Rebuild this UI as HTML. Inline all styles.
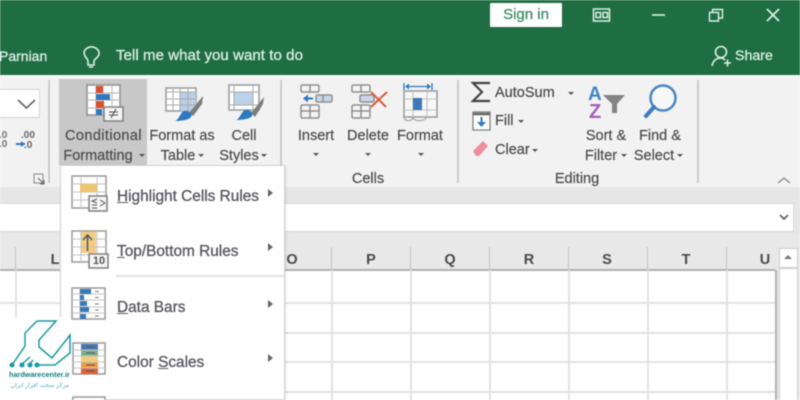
<!DOCTYPE html>
<html><head><meta charset="utf-8"><style>
html,body{margin:0;padding:0;background:#fff}
#p{position:relative;width:800px;height:400px;overflow:hidden;background:#f2f2f2;font-family:"Liberation Sans",sans-serif;filter:blur(.5px)}
.a{position:absolute}
.t{position:absolute;white-space:nowrap;font-size:14.5px;color:#4c4c4c;line-height:18px;text-align:center;transform:translateX(-50%);-webkit-text-stroke:.2px #4c4c4c}
.l{position:absolute;white-space:nowrap;font-size:14.5px;color:#4c4c4c;line-height:18px;-webkit-text-stroke:.2px #4c4c4c}
.w{position:absolute;white-space:nowrap;color:#dcefe4;font-size:15px;line-height:18px;-webkit-text-stroke:.3px #dcefe4}
.h{position:absolute;font-weight:bold;font-size:14.5px;color:#4a4a4a;line-height:18px;transform:translateX(-50%)}
.m{position:absolute;left:117px;white-space:nowrap;font-size:15.4px;color:#5a5a64;line-height:18px;-webkit-text-stroke:.35px #5a5a64}
.m u{text-decoration-thickness:1px}
.ar{position:absolute;width:0;height:0;border-left:5px solid #666;border-top:4px solid transparent;border-bottom:4px solid transparent}
.dn{position:absolute;width:0;height:0;border-top:3px solid #555;border-left:3px solid transparent;border-right:3px solid transparent}
.v{position:absolute;width:1.5px;background:#e2e2e2}
.g{position:absolute;height:1.5px;background:#e2e2e2}
.s{position:absolute;width:1.5px;background:#cacaca}
svg{position:absolute;overflow:visible}
</style></head><body><div id="p">

<div class="a" style="left:0;top:0;width:800px;height:75px;background:#1f6e43"></div>
<div class="a" style="left:0;top:75px;width:800px;height:3px;background:#f6f6f6"></div>
<div class="a" style="left:0;top:187px;width:800px;height:46px;background:#e6e6e6"></div>

<div class="w" style="left:-1px;top:47px;font-size:14px">Parnian</div>
<svg style="left:0;top:0" width="800" height="75" fill="none" stroke="#dcefe4" stroke-width="1.6">
<path d="M88 65v-4c0-2-4-4-4-9a8 8 0 0 1 15 0c1 5-5 7-5 9v4zM89 67h4"/>
<path d="M593.500 9h16v12h-16zM596 12.500h4.500v5H596zM603 12.500h4.500v5H603z" stroke-width="1.500"/>
<path d="M652 15h13" stroke-width="1.600"/>
<path d="M709.500 12.500h9v8.500h-9zM712.500 12.500v-3h10v8.500h-4" stroke-width="1.400"/>
<path d="M767 9l12 12M779 9l-12 12" stroke-width="1.800"/>
<circle cx="721" cy="52" r="5.500"/><path d="M712 66c1-5 4-8 9-8 2 0 3 1 4 2M724 63h7M727.500 59.500v7"/>
</svg>
<div class="w" style="left:116px;top:47px;letter-spacing:.07px">Tell me what you want to do</div>
<div class="w" style="left:735px;top:47px;font-size:14.2px">Share</div>
<div class="a" style="left:490px;top:3px;width:72px;height:24px;background:#fff;border-radius:1px"></div>
<div class="a" style="left:490px;top:6px;width:72px;text-align:center;font-size:15px;line-height:18px;color:#3d8a62;-webkit-text-stroke:.25px #3d8a62">Sign in</div>

<!-- left stub -->
<div class="a" style="left:0;top:89px;width:39px;height:27px;background:#fff;border:1px solid #d6d6d6;border-left:0"></div>
<svg style="left:0;top:0" width="60" height="190" fill="none"><path d="M18 100l8.500 8 8.500-8" stroke="#666" stroke-width="1.600"/>
<text x="-1" y="147" font-size="10" font-weight="bold" fill="#777" font-family="Liberation Sans">.0</text>
<text x="-1" y="138" font-size="10" font-weight="bold" fill="#777" font-family="Liberation Sans">.0</text>
<text x="21" y="138" font-size="10" font-weight="bold" fill="#666" font-family="Liberation Sans">.00</text>
<text x="24" y="148" font-size="10" font-weight="bold" fill="#666" font-family="Liberation Sans">.0</text>
<path d="M16 144h9" stroke="#2f78bd" stroke-width="2"/><path d="M21 141l4 3-4 3z" fill="#2f78bd"/>
<path d="M34 174h9v9h-9z" stroke="#888"/><path d="M38 178l6 6M44 180v4h-4" stroke="#666"/></svg>
<div class="s" style="left:48px;top:80px;height:103px"></div>
<div class="s" style="left:280px;top:80px;height:103px"></div>
<div class="s" style="left:457px;top:80px;height:103px"></div>
<div class="s" style="left:697px;top:80px;height:103px"></div>

<!-- highlighted button -->
<div class="a" style="left:59px;top:79px;width:88px;height:86px;background:#c8c8c8"></div>

<svg style="left:0;top:0" width="800" height="190" fill="none">
<!-- conditional formatting -->
<path d="M87 85h33v30H87z" fill="#fff" stroke="#8f8f8f" stroke-width="1.500"/>
<path d="M87 93h33M87 100h33M87 108h33M96 85v30M103 85v30M112 85v30" stroke="#b5b5b5"/>
<path d="M96 86h7v7h-7z" fill="#d9512c"/><path d="M96 94h14v6H96z" fill="#2f78bd"/><path d="M96 101h8v7h-8z" fill="#d9512c"/><path d="M96 109h6v6h-6z" fill="#2f78bd"/>
<path d="M104 107h19v14h-19z" fill="#f4f4f4" stroke="#808080" stroke-width="1.500"/>
<path d="M109 112h9M109 115h9M116 109l-5 9" stroke="#555" stroke-width="1.100"/>
<!-- format as table -->
<path d="M166 88h30v23h-30z" fill="#fff" stroke="#9a9a9a" stroke-width="1.500"/>
<path d="M180 92h16v19h-16z" fill="#b9cfe8"/>
<path d="M166 92h30M166 99h30M166 105h30M173 88v23M180 88v23M188 88v23" stroke="#a9a9a9"/>
<path d="M189 113l9-11 5-6-1 8-9 12z" fill="#7c7c7c"/>
<path d="M175 121c4-1 5-8 9-10 3-1 9 2 7 6-2 3-10 4-16 4z" fill="#2e78c0"/>
<!-- cell styles -->
<path d="M229 85h30v25h-30z" fill="#fff" stroke="#9a9a9a" stroke-width="1.500"/>
<path d="M234 92h19v13h-19z" fill="#bcd2ea"/>
<path d="M229 92h30M229 105h30M234 85v25M253 85v25" stroke="#a9a9a9"/>
<path d="M251 113l9-11 4-5-1 7-8 13z" fill="#7c7c7c"/>
<path d="M236 120c4-1 5-8 9-10 3-1 9 2 7 6-2 3-10 4-16 4z" fill="#2e78c0"/>
<!-- insert -->
<g stroke="#8f8f8f" stroke-width="1.500">
<rect x="301" y="85" width="18" height="7" rx="1.500" fill="#f4f4f4"/><path d="M310 85v7"/>
<rect x="301" y="105" width="18" height="13" rx="1.500" fill="#f4f4f4"/><path d="M310 105v13M301 111h18"/>
<rect x="316" y="95" width="16" height="7" rx="1.500" fill="#c7d7e8"/><path d="M323 95v7"/>
<rect x="352" y="85" width="18" height="7" rx="1.500" fill="#f4f4f4"/><path d="M361 85v7"/>
<rect x="352" y="105" width="18" height="13" rx="1.500" fill="#f4f4f4"/><path d="M361 105v13M352 111h18"/>
<rect x="360" y="95" width="14" height="7" rx="1.500" fill="#c7d7e8"/>
</g>
<path d="M304 98.500h9" stroke="#2f78bd" stroke-width="2"/><path d="M308 94.500l-5 4 5 4z" fill="#2f78bd"/>
<path d="M371 92l15 15M387 92l-16 15" stroke="#e0583a" stroke-width="2"/>
<!-- format -->
<path d="M404 91h33v26h-33z" fill="#f7f7f7" stroke="#9a9a9a" stroke-width="1.500"/>
<path d="M404 99h33M404 110h33M413 91v26M427 91v26" stroke="#c0c0c0"/>
<path d="M413 98h9v12h-9z" fill="#3b78b8"/>
<path d="M404 117c0 5 9 5 9 0M413 117c0 5 12 5 14 0" stroke="#9a9a9a"/>
<path d="M404 83v7M432 83v7M407 86.500h23" stroke="#2f78bd" stroke-width="1.300"/>
<path d="M405 86.500l4-3v6zM431 86.500l-4-3v6z" fill="#2f78bd"/>
<!-- autosum etc -->
<path d="M490 83h-17l9 9-9 9h17" stroke="#444" stroke-width="2.200"/>
<path d="M473 112h17v18h-17z" fill="#fff" stroke="#7f7f7f" stroke-width="1.300"/>
<path d="M473 114h17" stroke="#666" stroke-width="2.500"/>
<path d="M481.500 117v8" stroke="#2f78bd" stroke-width="2"/><path d="M477 122l4.500 5 4.500-5z" fill="#2f78bd"/>
<path d="M473 151l10-10 5 5-9 10h-3z" fill="#ee8d9c"/>
<!-- sort -->
<text x="588" y="100" font-size="19" font-weight="bold" fill="#3f86cc" font-family="Liberation Sans">A</text>
<text x="589" y="118" font-size="20" font-weight="bold" fill="#a45ec1" font-family="Liberation Sans">Z</text>
<path d="M603 95h22l-8 9v9h-5v-9z" fill="#838383"/>
<!-- find -->
<circle cx="663" cy="98" r="12.500" fill="#f7f7f7" stroke="#4a86c5" stroke-width="2.500"/>
<path d="M654 107l-8 9" stroke="#3c7cbd" stroke-width="4" stroke-linecap="round"/>
<path d="M778 183l6-5 6 5" stroke="#888" stroke-width="1.300"/>
</svg>

<div class="t" style="left:103.500px;top:127px;letter-spacing:.4px">Conditional</div>
<div class="t" style="left:98px;top:147px">Formatting</div>
<div class="t" style="left:182px;top:127px">Format as</div>
<div class="t" style="left:178px;top:147px">Table</div>
<div class="t" style="left:244px;top:127px">Cell</div>
<div class="t" style="left:239px;top:147px">Styles</div>
<div class="t" style="left:316px;top:127px">Insert</div>
<div class="t" style="left:368px;top:127px">Delete</div>
<div class="t" style="left:420px;top:127px">Format</div>
<div class="t" style="left:368px;top:170px">Cells</div>
<div class="l" style="left:495px;top:84px">AutoSum</div>
<div class="l" style="left:495px;top:112px">Fill</div>
<div class="l" style="left:495px;top:141px">Clear</div>
<div class="t" style="left:606px;top:127px">Sort &amp;</div>
<div class="t" style="left:601px;top:147px">Filter</div>
<div class="t" style="left:660px;top:127px">Find &amp;</div>
<div class="t" style="left:654px;top:147px">Select</div>
<div class="t" style="left:577px;top:170px">Editing</div>
<div class="dn" style="left:139px;top:154px"></div>
<div class="dn" style="left:198px;top:154px"></div>
<div class="dn" style="left:261px;top:154px"></div>
<div class="dn" style="left:313px;top:153px"></div>
<div class="dn" style="left:365px;top:153px"></div>
<div class="dn" style="left:418px;top:153px"></div>
<div class="dn" style="left:568px;top:92px"></div>
<div class="dn" style="left:518px;top:120px"></div>
<div class="dn" style="left:532px;top:149px"></div>
<div class="dn" style="left:621px;top:154px"></div>
<div class="dn" style="left:677px;top:154px"></div>

<!-- formula bar -->
<div class="a" style="left:0;top:203px;width:794px;height:29px;background:#fff;border:1px solid #d9d9d9;border-left:0;box-sizing:border-box"></div>
<svg style="left:0;top:0" width="800" height="400" fill="none"><path d="M780 215l4 4 4-4" stroke="#666" stroke-width="1.800"/></svg>

<!-- sheet -->
<div class="a" style="left:0;top:233px;width:800px;height:167px;background:#e8e8e8"></div>
<div class="a" style="left:0;top:270px;width:775px;height:130px;background:#fff"></div>
<div class="a" style="left:0;top:269px;width:775px;height:1.500px;background:#b0b0b0"></div>
<div class="a" style="left:775px;top:270px;width:1.500px;height:130px;background:#b0b0b0"></div>
<div class="g" style="left:0;top:302px;width:775px"></div>
<div class="g" style="left:0;top:332px;width:775px"></div>
<div class="g" style="left:0;top:361px;width:775px"></div>
<div class="g" style="left:0;top:391px;width:775px"></div>
<div class="v" style="left:15px;top:270px;height:130px"></div>
<div class="v" style="left:331px;top:270px;height:130px"></div>
<div class="v" style="left:410px;top:270px;height:130px"></div>
<div class="v" style="left:489px;top:270px;height:130px"></div>
<div class="v" style="left:568px;top:270px;height:130px"></div>
<div class="v" style="left:647px;top:270px;height:130px"></div>
<div class="v" style="left:726px;top:270px;height:130px"></div>
<div class="a" style="left:15px;top:247px;width:1px;height:23px;background:#c4c4c4"></div>
<div class="a" style="left:331px;top:247px;width:1px;height:23px;background:#c4c4c4"></div>
<div class="a" style="left:410px;top:247px;width:1px;height:23px;background:#c4c4c4"></div>
<div class="a" style="left:489px;top:247px;width:1px;height:23px;background:#c4c4c4"></div>
<div class="a" style="left:568px;top:247px;width:1px;height:23px;background:#c4c4c4"></div>
<div class="a" style="left:647px;top:247px;width:1px;height:23px;background:#c4c4c4"></div>
<div class="a" style="left:726px;top:247px;width:1px;height:23px;background:#c4c4c4"></div>
<div class="h" style="left:55px;top:251px">L</div>
<div class="h" style="left:292px;top:251px">O</div>
<div class="h" style="left:371px;top:251px">P</div>
<div class="h" style="left:450px;top:251px">Q</div>
<div class="h" style="left:529px;top:251px">R</div>
<div class="h" style="left:607px;top:251px">S</div>
<div class="h" style="left:686px;top:251px">T</div>
<div class="h" style="left:765px;top:251px">U</div>
<div class="a" style="left:779px;top:248px;width:17px;height:18px;background:#fff;border:1px solid #cfcfcf"></div>
<div class="a" style="left:784px;top:255px;width:0;height:0;border-bottom:4px solid #777;border-left:4px solid transparent;border-right:4px solid transparent"></div>
<div class="a" style="left:779px;top:268px;width:17px;height:132px;background:#fff;border:1px solid #cfcfcf"></div>

<!-- menu -->
<div class="a" style="left:60px;top:165px;width:225px;height:235px;background:#fff;border:1px solid #d2d2d2;box-sizing:border-box;box-shadow:1px 1px 2px rgba(0,0,0,.12)"></div>
<div class="a" style="left:116px;top:275px;width:168px;height:1.500px;background:#e2e2e2"></div>
<div class="m" style="top:188px"><u>H</u>ighlight Cells Rules</div>
<div class="m" style="top:243px"><u>T</u>op/Bottom Rules</div>
<div class="m" style="top:299px"><u>D</u>ata Bars</div>
<div class="m" style="top:354px">Color <u>S</u>cales</div>
<div class="ar" style="left:268px;top:189px"></div>
<div class="ar" style="left:268px;top:243px"></div>
<div class="ar" style="left:268px;top:300px"></div>
<div class="ar" style="left:268px;top:354px"></div>

<svg style="left:0;top:0" width="800" height="400" fill="none">
<!-- highlight -->
<path d="M72 176h34v32H72z" fill="#fff" stroke="#9a9a9a" stroke-width="1.500"/>
<path d="M72 184h34M72 192h34M72 200h34M81 176v32M97 176v32" stroke="#c4c4c4"/>
<path d="M80 184h17v8H80z" fill="#efc56e"/>
<path d="M89 196h18v15H89z" fill="#f6f6f6" stroke="#808080" stroke-width="1.500"/>
<path d="M97 199l-5 2 5 2M92 205h5M92 208h5M100 200l5 3-5 3" stroke="#555"/>
<!-- top10 -->
<path d="M72 231h34v31H72z" fill="#fff" stroke="#9a9a9a" stroke-width="1.500"/>
<path d="M81 232h15v21H81z" fill="#f3cc7e"/>
<path d="M72 239h34M72 247h34M72 255h34M81 231v31M97 231v31" stroke="#c4c4c4"/>
<path d="M87.500 251v-16M83 240l4.500-5 4.500 5" stroke="#555" stroke-width="1.500"/>
<path d="M89 254h19v14H89z" fill="#f6f6f6" stroke="#808080" stroke-width="1.500"/>
<!-- data bars -->
<path d="M72 288h33v31H72z" fill="#fff" stroke="#9a9a9a" stroke-width="1.500"/>
<path d="M72 294h33M72 300h33M72 307h33M72 313h33M80 288v31" stroke="#c4c4c4"/>
<path d="M80 289h11v5H80zM80 295h4v5h-4zM80 301h7v5h-7zM80 307h9v5h-9zM80 314h6v5h-6z" fill="#3b78b8"/>
<path d="M95 291.500h4M95 297.500h4M95 304h4M95 310h4M95 316h4" stroke="#777"/>
<!-- color scales -->
<path d="M73 343h32v31H73z" fill="#fff" stroke="#9a9a9a" stroke-width="1.500"/>
<path d="M81 344h17v6H81z" fill="#4678b4"/><path d="M81 350h17v6H81z" fill="#7cab92"/><path d="M81 356h17v6H81z" fill="#efcd7b"/><path d="M81 362h17v6H81z" fill="#ec9a43"/><path d="M81 368h17v6H81z" fill="#e06136"/>
<path d="M73 350h32M73 356h32M73 362h32M73 368h32" stroke="#c4c4c4"/>
<path d="M86 347h9M86 353h9M86 365h9M86 371h9" stroke="#555"/>
<!-- partial -->
<path d="M73 397h32v5H73z" fill="#fff" stroke="#9a9a9a" stroke-width="1.500"/>
</svg>
<div class="a" style="left:91px;top:254px;width:16px;text-align:center;font-size:11px;font-weight:bold;color:#555;line-height:15px">10</div>

<!-- logo -->
<div class="a" style="left:0;top:317px;width:71px;height:83px;background:#fff"></div>
<svg style="left:0;top:0" width="100" height="400" fill="none" stroke="#1a9aa5" stroke-width="1.500">
<path d="M12 365L25 346V333L37 321H56L39 340V347L52 358L70 335V353L55 365H37"/>
<path d="M21 365L30 357M29 365L33 360"/>
<circle cx="12" cy="365" r="1.800" fill="#1a9aa5"/><circle cx="22" cy="365" r="1.800" fill="#1a9aa5"/><circle cx="30" cy="365" r="1.800" fill="#1a9aa5"/><circle cx="37" cy="365" r="1.800" fill="#1a9aa5"/>
</svg>
<div class="a" style="left:9px;top:369px;font-size:7.3px;font-weight:bold;color:#127f88;line-height:12px;white-space:nowrap">hardwarecenter.ir</div>
<div class="a" style="left:9px;top:380px;width:60px;font-size:6px;color:#4bb0b8;line-height:11px;white-space:nowrap;direction:rtl;font-family:'DejaVu Sans',sans-serif">مرکز سخت افزار ایران</div>

</div></body></html>
